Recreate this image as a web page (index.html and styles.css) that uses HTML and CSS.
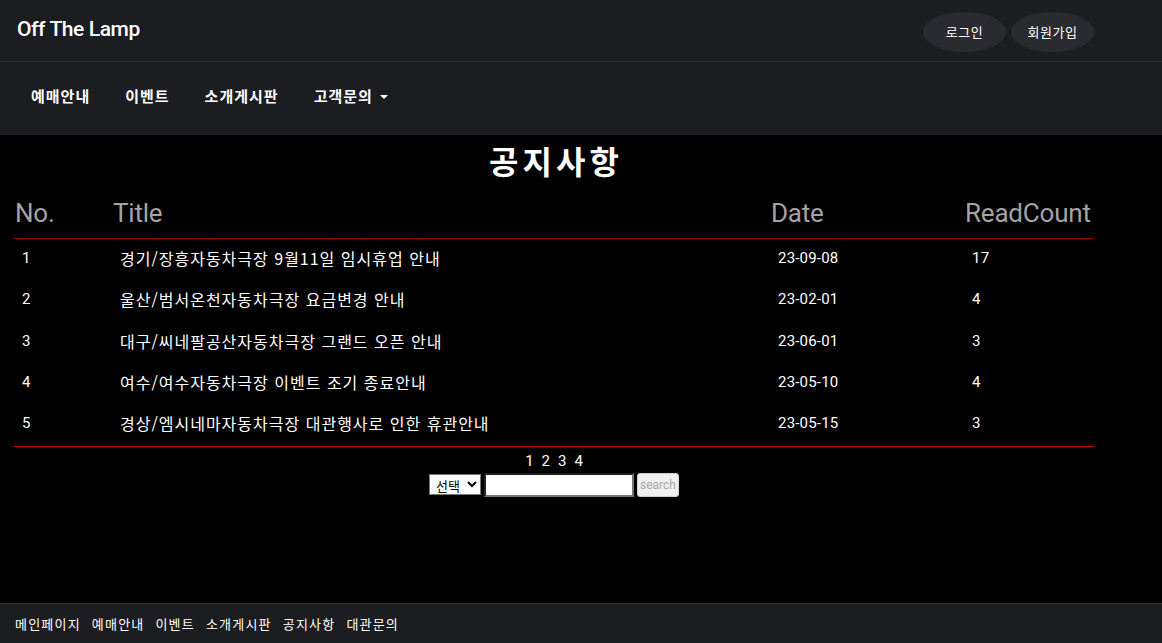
FILE: index.html
```html
<!DOCTYPE html>
<html lang="ko">
<head>
<meta charset="utf-8">
<title>Off The Lamp - 공지사항</title>
<link rel="stylesheet" href="styles.css">
</head>
<body>
<div class="page">
  <header class="topbar">
    <a class="brand" href="#">Off The Lamp</a>
    <div class="auth">
      <a class="pill" href="#">로그인</a>
      <a class="pill" href="#">회원가입</a>
    </div>
  </header>
  <nav class="menu">
    <a href="#">예매안내</a>
    <a href="#">이벤트</a>
    <a href="#">소개게시판</a>
    <a href="#" class="dropdown">고객문의<span class="caret"></span></a>
  </nav>
  <main class="content">
    <h1 class="title">공지사항</h1>
    <table class="board">
      <colgroup>
        <col class="c-no"><col class="c-title"><col class="c-date"><col class="c-count">
      </colgroup>
      <thead>
        <tr><th>No.</th><th>Title</th><th>Date</th><th>ReadCount</th></tr>
      </thead>
      <tbody>
        <tr><td class="num">1</td><td>경기/장흥자동차극장 9월11일 임시휴업 안내</td><td class="num">23-09-08</td><td class="num">17</td></tr>
        <tr><td class="num">2</td><td>울산/범서온천자동차극장 요금변경 안내</td><td class="num">23-02-01</td><td class="num">4</td></tr>
        <tr><td class="num">3</td><td>대구/씨네팔공산자동차극장 그랜드 오픈 안내</td><td class="num">23-06-01</td><td class="num">3</td></tr>
        <tr><td class="num">4</td><td>여수/여수자동차극장 이벤트 조기 종료안내</td><td class="num">23-05-10</td><td class="num">4</td></tr>
        <tr><td class="num">5</td><td>경상/엠시네마자동차극장 대관행사로 인한 휴관안내</td><td class="num">23-05-15</td><td class="num">3</td></tr>
      </tbody>
    </table>
    <div class="pager">
      <a href="#">1</a><a href="#">2</a><a href="#">3</a><a href="#">4</a>
    </div>
    <form class="search">
      <select class="sel"><option>선택</option><option>제목</option><option>내용</option></select>
      <input class="query" type="text">
      <button class="btn" type="button" disabled>search</button>
    </form>
  </main>
  <footer class="footer">
    <a href="#">메인페이지</a>
    <a href="#">예매안내</a>
    <a href="#">이벤트</a>
    <a href="#">소개게시판</a>
    <a href="#">공지사항</a>
    <a href="#">대관문의</a>
  </footer>
</div>
</body>
</html>
```

FILE: styles.css
```css
* { box-sizing: border-box; }
html, body { margin: 0; padding: 0; }
body {
  background: #000;
  color: #fff;
  font-family: Roboto, "Noto Sans CJK KR", sans-serif;
}
a { color: #fff; text-decoration: none; }

.page {
  min-height: 100vh;
  display: flex;
  flex-direction: column;
}

.topbar {
  height: 62px;
  background: #1c1d21;
  border-bottom: 1px solid #2c2d32;
  display: flex;
  align-items: center;
  justify-content: space-between;
  padding: 0 68px 0 17px;
}
.brand {
  font-family: Roboto, sans-serif;
  font-weight: 500;
  font-size: 21px;
  letter-spacing: -0.4px;
  margin-top: -3px;
}
.auth { display: flex; gap: 5px; margin-top: 2px; }
.pill {
  width: 83px;
  height: 40px;
  border-radius: 50%;
  background: #2a2b30;
  display: flex;
  align-items: center;
  justify-content: center;
  font-family: "Noto Sans CJK KR", sans-serif;
  font-size: 13px;
  letter-spacing: 0.5px;
}

.menu {
  height: 73px;
  background: #1c1d21;
  display: flex;
  align-items: center;
  padding: 0 0 6px 31px;
  gap: 35px;
}
.menu a {
  font-family: "Noto Sans CJK KR", sans-serif;
  font-weight: 700;
  font-size: 15px;
  letter-spacing: 1px;
  display: flex;
  align-items: center;
}
.caret {
  display: inline-block;
  width: 0;
  height: 0;
  border-left: 4px solid transparent;
  border-right: 4px solid transparent;
  border-top: 4px solid #fff;
  margin-left: 7px;
  margin-top: 2px;
}

.content {
  flex: 1;
  width: 1080px;
  margin-left: 14px;
  display: flex;
  flex-direction: column;
  align-items: center;
}
.title {
  margin: 0;
  height: 50px;
  display: flex;
  align-items: center;
  padding-left: 4px;
  font-family: "Noto Sans CJK KR", sans-serif;
  font-weight: 700;
  font-size: 32px;
  letter-spacing: 4px;
}

.board {
  width: 1080px;
  border-collapse: collapse;
  table-layout: fixed;
}
.c-no { width: 98px; }
.c-title { width: 658px; }
.c-date { width: 194px; }
.c-count { width: 130px; }

.board th {
  height: 53px;
  text-align: left;
  font-family: Roboto, sans-serif;
  font-weight: 400;
  font-size: 26px;
  letter-spacing: -0.2px;
  color: #a3a3a3;
  padding: 3px 0 0 1px;
  border-bottom: 1px solid #9a0000;
}
.board tbody tr { height: 42px; }
.board tbody tr:nth-child(even) { height: 41px; }
.board tbody tr:last-child td { border-bottom: 1px solid #d00000; }
.board td {
  padding: 0 0 3px 8px;
  font-family: "Noto Sans CJK KR", sans-serif;
  font-size: 16px;
  letter-spacing: 1px;
  white-space: nowrap;
}
.board td.num {
  font-family: Roboto, sans-serif;
  font-size: 15px;
  letter-spacing: 0.2px;
}

.pager {
  margin-top: 5px;
  display: flex;
  gap: 8px;
  height: 18px;
  align-items: center;
}
.pager a {
  font-family: Roboto, sans-serif;
  font-size: 15px;
}

.search {
  margin-top: 3px;
  display: flex;
  align-items: center;
  gap: 3px;
}
.sel {
  width: 52px;
  height: 21px;
  font-family: "Noto Sans CJK KR", sans-serif;
  font-size: 13px;
  background: #fff;
  color: #000;
  border: 1px solid #767676;
  border-radius: 0;
  padding: 0 2px;
}
.query {
  width: 150px;
  height: 24px;
  border: 2px inset #767676;
  background: #fff;
}
.btn {
  width: 42px;
  height: 24px;
  background: #efefef;
  color: #a8a8a8;
  border: 1px solid #cfcfcf;
  border-radius: 3px;
  font-family: Roboto, sans-serif;
  font-size: 12px;
  padding: 0;
}

.footer {
  height: 40px;
  background: #1c1d21;
  border-top: 1px solid #3a2a2a;
  display: flex;
  align-items: center;
  gap: 11px;
  padding-left: 15px;
}
.footer a {
  font-family: "Noto Sans CJK KR", sans-serif;
  font-size: 13px;
  letter-spacing: 1.2px;
}
```
